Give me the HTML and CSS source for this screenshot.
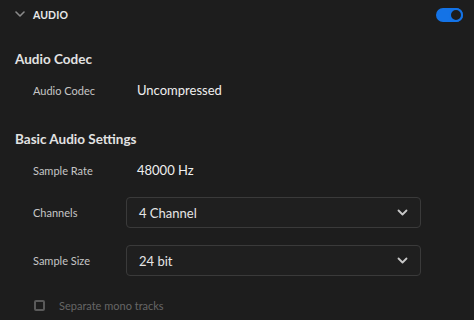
FILE: index.html
```html
<!DOCTYPE html>
<html>
<head>
<meta charset="utf-8">
<link rel="stylesheet" href="styles.css">
</head>
<body>
<div class="panel">
  <div class="header">
    <svg class="chev" width="10" height="6" viewBox="0 0 10 6"><path d="M1 1 L5 5 L9 1" fill="none" stroke="#8a8a8a" stroke-width="1.6" stroke-linecap="round" stroke-linejoin="round"/></svg>
    <span class="title">AUDIO</span>
    <span class="toggle"><span class="knob"></span></span>
  </div>

  <div class="section-title first">Audio Codec</div>
  <div class="row">
    <span class="label">Audio Codec</span>
    <span class="value">Uncompressed</span>
  </div>

  <div class="section-title second">Basic Audio Settings</div>
  <div class="row">
    <span class="label">Sample Rate</span>
    <span class="value">48000 Hz</span>
  </div>
  <div class="row select-row r1">
    <span class="label">Channels</span>
    <div class="select"><span>4 Channel</span>
      <svg width="11" height="7" viewBox="0 0 11 7"><path d="M1.5 1.5 L5.5 5.5 L9.5 1.5" fill="none" stroke="#c8c8c8" stroke-width="1.8" stroke-linecap="round" stroke-linejoin="round"/></svg>
    </div>
  </div>
  <div class="row select-row r2">
    <span class="label">Sample Size</span>
    <div class="select"><span>24 bit</span>
      <svg width="11" height="7" viewBox="0 0 11 7"><path d="M1.5 1.5 L5.5 5.5 L9.5 1.5" fill="none" stroke="#c8c8c8" stroke-width="1.8" stroke-linecap="round" stroke-linejoin="round"/></svg>
    </div>
  </div>
  <div class="check-row">
    <span class="box"></span>
    <span class="check-label">Separate mono tracks</span>
  </div>
</div>
</body>
</html>
```

FILE: styles.css
```css
html, body {
  margin: 0;
  padding: 0;
  background: #1d1d1d;
}
body {
  font-family: Lato, "Open Sans", sans-serif;
  color: #e6e6e6;
  width: 474px;
  height: 320px;
  overflow: hidden;
}
.panel {
  display: flex;
  flex-direction: column;
}
.header {
  height: 30px;
  display: flex;
  align-items: center;
  padding: 0 11px 0 15px;
}
.chev {
  margin-right: 8px;
  margin-top: -2px;
}
.title {
  font-weight: 700;
  font-size: 10.5px;
  color: #e8e8e8;
  letter-spacing: 0.1px;
  flex: 1;
}
.toggle {
  width: 27px;
  height: 14px;
  border-radius: 7px;
  background: #1473e6;
  display: flex;
  align-items: center;
  justify-content: flex-end;
  box-sizing: border-box;
  margin-top: -1px;
}
.knob {
  width: 14px;
  height: 14px;
  border-radius: 50%;
  background: #1d1d1d;
  border: 2.5px solid #1473e6;
  box-sizing: border-box;
}
.section-title {
  font-weight: 700;
  font-size: 13.5px;
  color: #e2e2e2;
  height: 30px;
  line-height: 30px;
  padding-left: 15px;
}
.section-title.first { margin-top: 14px; }
.section-title.second { margin-top: 18px; }
.row {
  display: flex;
  align-items: center;
  height: 32px;
  padding-left: 33px;
}
.label {
  width: 104px;
  font-size: 11px;
  color: #c6c6c6;
}
.value {
  font-size: 13px;
  color: #efefef;
}
.select-row {
  height: 31px;
}
.select-row .label { width: 93px; }
.r1 { margin-top: 11px; }
.r2 { margin-top: 17px; }
.select {
  width: 295px;
  height: 31px;
  box-sizing: border-box;
  border: 1px solid #3a3a3a;
  border-radius: 4px;
  background: #1f1f1f;
  display: flex;
  align-items: center;
  justify-content: space-between;
  padding: 0 12px 0 12px;
  font-size: 13px;
  color: #e6e6e6;
}
.check-row {
  display: flex;
  align-items: center;
  height: 20px;
  margin-top: 19px;
  padding-left: 34px;
}
.box {
  width: 11px;
  height: 11px;
  box-sizing: border-box;
  border: 2px solid #5a5a5a;
  border-radius: 2px;
  margin-right: 14px;
}
.check-label {
  font-size: 11px;
  color: #666;
}
```
